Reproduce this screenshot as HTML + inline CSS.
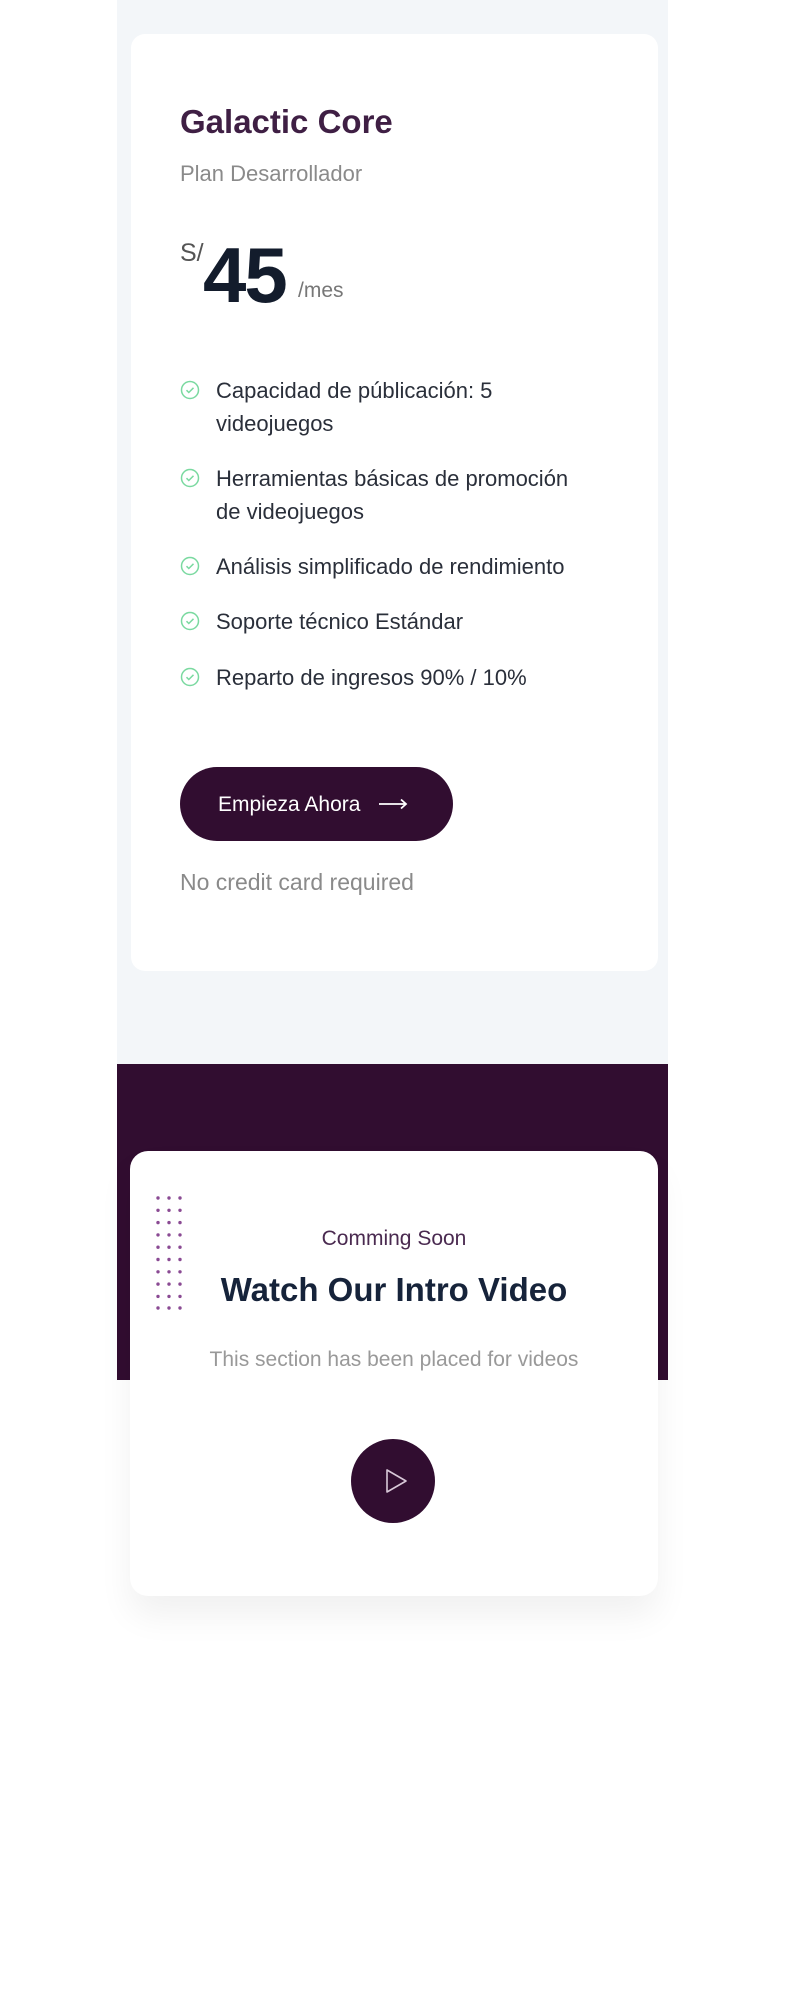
<!DOCTYPE html>
<html><head><meta charset="utf-8"><style>
*{margin:0;padding:0;box-sizing:border-box}
body{width:800px;height:2000px;background:#fff;font-family:"Liberation Sans",sans-serif;position:relative;overflow:hidden}
.abs{position:absolute;white-space:nowrap;line-height:1}
.li{left:180px;font-size:22px;color:#2a2f3a;line-height:33px}
.li svg{position:absolute;left:0;top:6px}
.li span{position:absolute;left:36px;top:0}
</style></head><body>
<div class="abs" style="left:117px;top:0;width:551px;height:1064px;background:#f3f6f9"></div>
<div class="abs" style="left:131px;top:34px;width:527px;height:937px;background:#fff;border-radius:14px"></div>
<div class="abs" style="left:180px;top:105px;font-size:33px;font-weight:bold;color:#3f1f44">Galactic Core</div>
<div class="abs" style="left:180px;top:163px;font-size:22px;color:#8a8a8a">Plan Desarrollador</div>
<div class="abs" style="left:180px;top:241px;font-size:25px;color:#555">S/</div>
<div class="abs" style="left:203px;top:236px;font-size:78px;font-weight:bold;color:#131c2c;letter-spacing:-2px">45</div>
<div class="abs" style="left:298px;top:280px;font-size:21px;color:#777">/mes</div>

<div class="abs li" style="top:374px"><svg width="20" height="20" viewBox="0 0 20 20"><circle cx="10" cy="10" r="8.5" fill="none" stroke="#7ad9a0" stroke-width="1.5"/><path d="M6.5 10.2l2.3 2.3 4.7-4.7" fill="none" stroke="#7ad9a0" stroke-width="1.5"/></svg><span>Capacidad de públicación: 5<br>videojuegos</span></div>
<div class="abs li" style="top:462px"><svg width="20" height="20" viewBox="0 0 20 20"><circle cx="10" cy="10" r="8.5" fill="none" stroke="#7ad9a0" stroke-width="1.5"/><path d="M6.5 10.2l2.3 2.3 4.7-4.7" fill="none" stroke="#7ad9a0" stroke-width="1.5"/></svg><span>Herramientas básicas de promoción<br>de videojuegos</span></div>
<div class="abs li" style="top:550px"><svg width="20" height="20" viewBox="0 0 20 20"><circle cx="10" cy="10" r="8.5" fill="none" stroke="#7ad9a0" stroke-width="1.5"/><path d="M6.5 10.2l2.3 2.3 4.7-4.7" fill="none" stroke="#7ad9a0" stroke-width="1.5"/></svg><span>Análisis simplificado de rendimiento</span></div>
<div class="abs li" style="top:605px"><svg width="20" height="20" viewBox="0 0 20 20"><circle cx="10" cy="10" r="8.5" fill="none" stroke="#7ad9a0" stroke-width="1.5"/><path d="M6.5 10.2l2.3 2.3 4.7-4.7" fill="none" stroke="#7ad9a0" stroke-width="1.5"/></svg><span>Soporte técnico Estándar</span></div>
<div class="abs li" style="top:661px"><svg width="20" height="20" viewBox="0 0 20 20"><circle cx="10" cy="10" r="8.5" fill="none" stroke="#7ad9a0" stroke-width="1.5"/><path d="M6.5 10.2l2.3 2.3 4.7-4.7" fill="none" stroke="#7ad9a0" stroke-width="1.5"/></svg><span>Reparto de ingresos 90% / 10%</span></div>

<div class="abs" style="left:180px;top:767px;width:273px;height:74px;border-radius:37px;background:#310d30"></div>
<div class="abs" style="left:218px;top:794px;font-size:21px;color:#fff">Empieza Ahora</div>
<svg class="abs" style="left:378px;top:798px" width="30" height="12" viewBox="0 0 30 12"><path d="M1 6h27M23 1.5l5 4.5-5 4.5" fill="none" stroke="#fff" stroke-width="1.8"/></svg>
<div class="abs" style="left:180px;top:871px;font-size:23px;color:#8a8a8a">No credit card required</div>

<div class="abs" style="left:117px;top:1064px;width:551px;height:316px;background:#310d30"></div>
<div class="abs" style="left:130px;top:1151px;width:528px;height:445px;background:#fff;border-radius:18px;box-shadow:0 20px 34px rgba(0,0,0,0.06)"></div>
<svg class="abs" style="left:155px;top:1195px" width="34" height="116" viewBox="0 0 34 116">
 <g fill="#8a4a93">
  <circle cx="3" cy="3" r="1.7"/><circle cx="14" cy="3" r="1.7"/><circle cx="25" cy="3" r="1.7"/>
  <circle cx="3" cy="15.3" r="1.7"/><circle cx="14" cy="15.3" r="1.7"/><circle cx="25" cy="15.3" r="1.7"/>
  <circle cx="3" cy="27.6" r="1.7"/><circle cx="14" cy="27.6" r="1.7"/><circle cx="25" cy="27.6" r="1.7"/>
  <circle cx="3" cy="39.9" r="1.7"/><circle cx="14" cy="39.9" r="1.7"/><circle cx="25" cy="39.9" r="1.7"/>
  <circle cx="3" cy="52.2" r="1.7"/><circle cx="14" cy="52.2" r="1.7"/><circle cx="25" cy="52.2" r="1.7"/>
  <circle cx="3" cy="64.5" r="1.7"/><circle cx="14" cy="64.5" r="1.7"/><circle cx="25" cy="64.5" r="1.7"/>
  <circle cx="3" cy="76.8" r="1.7"/><circle cx="14" cy="76.8" r="1.7"/><circle cx="25" cy="76.8" r="1.7"/>
  <circle cx="3" cy="89.1" r="1.7"/><circle cx="14" cy="89.1" r="1.7"/><circle cx="25" cy="89.1" r="1.7"/>
  <circle cx="3" cy="101.4" r="1.7"/><circle cx="14" cy="101.4" r="1.7"/><circle cx="25" cy="101.4" r="1.7"/>
  <circle cx="3" cy="113" r="1.7"/><circle cx="14" cy="113" r="1.7"/><circle cx="25" cy="113" r="1.7"/>
 </g></svg>
<div class="abs" style="left:130px;width:528px;text-align:center;top:1228px;font-size:21px;color:#4a2a50">Comming Soon</div>
<div class="abs" style="left:130px;width:528px;text-align:center;top:1273px;font-size:33px;font-weight:bold;color:#16233a">Watch Our Intro Video</div>
<div class="abs" style="left:130px;width:528px;text-align:center;top:1349px;font-size:21px;color:#999">This section has been placed for videos</div>
<div class="abs" style="left:351px;top:1439px;width:84px;height:84px;border-radius:50%;background:#310d30"></div>
<svg class="abs" style="left:385px;top:1468px" width="24" height="26" viewBox="0 0 24 26"><path d="M2 2v22l19-11z" fill="none" stroke="#d8c8d8" stroke-width="1.6" stroke-linejoin="round"/></svg>
</body></html>
